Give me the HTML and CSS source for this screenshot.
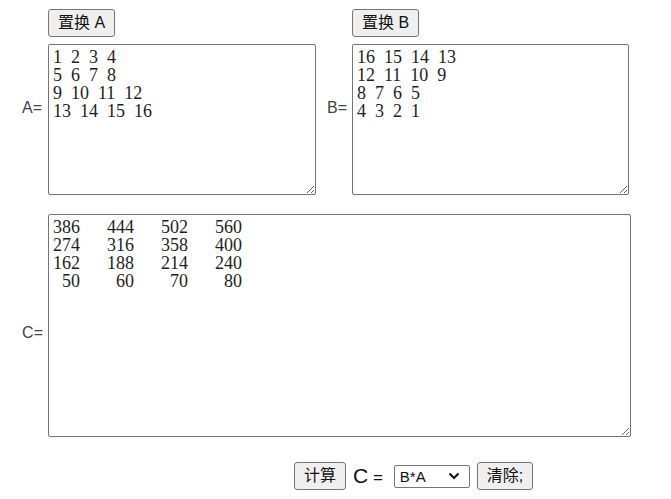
FILE: index.html
```html
<!DOCTYPE html>
<html>
<head>
<meta charset="utf-8">
<link rel="stylesheet" href="styles.css">
</head>
<body>
<div class="grid">
  <div class="cell"></div>
  <div class="cell"><button class="btn">置换 A</button></div>
  <div class="cell"></div>
  <div class="cell"><button class="btn">置换 B</button></div>

  <div class="label label-ab">A=</div>
  <textarea class="ta ta-a">1 2 3 4
5 6 7 8
9 10 11 12
13 14 15 16</textarea>
  <div class="label label-ab label-b">B=</div>
  <textarea class="ta ta-b">16 15 14 13
12 11 10 9
8 7 6 5
4 3 2 1</textarea>

  <div class="label label-c">C=</div>
  <textarea class="ta ta-c">386   444   502   560
274   316   358   400
162   188   214   240
 50    60    70    80</textarea>
</div>
<div class="controls">
  <button class="btn">计算</button>
  <span class="ceq"><span class="cbig">C</span> =</span>
  <div class="sel">
    <span>B*A</span>
    <svg width="12" height="8" viewBox="0 0 12 8"><path d="M1.5 1.5 L6 6 L10.5 1.5" fill="none" stroke="#111" stroke-width="2"/></svg>
  </div>
  <button class="btn">清除;</button>
</div>
</body>
</html>
```
FILE: styles.css
```css
html, body { margin: 0; padding: 0; background: #fff; }
body { font-family: "Liberation Sans", "Noto Sans CJK SC", sans-serif; color: #222; }
.grid {
  display: grid;
  grid-template-columns: 48px 268px 36px 279px;
  grid-template-rows: auto auto auto;
  padding-top: 9px;
}
.cell { display: flex; align-items: flex-start; }
.btn {
  font-family: "Liberation Sans", "Noto Sans CJK SC", sans-serif;
  font-size: 16px;
  height: 28px;
  padding: 0 9px;
  background: #efefef;
  border: 1px solid #767676;
  border-radius: 3px;
  color: #111;
  line-height: 26px;
  margin: 0;
}
.label {
  font-size: 16px;
  color: #444;
  display: flex;
  align-items: center;
  justify-content: flex-end;
  padding-right: 6px;
}
.label-ab { margin-top: 7px; padding-bottom: 24px; }
.label-b { padding-right: 5px; }
.label-c { margin-top: 19px; padding-top: 15px; padding-right: 5px; }
.ta {
  box-sizing: border-box;
  display: block;
  margin: 0;
  border: 1px solid #767676;
  border-radius: 2px;
  padding: 3px 3px 2px 4px;
  font-family: "Liberation Serif", serif;
  font-size: 18px;
  word-spacing: 4.5px;
  line-height: 18px;
  color: #1e1e1e;
  resize: both;
  white-space: pre;
  overflow: hidden;
}
.ta-a { width: 268px; height: 151px; margin-top: 7px; }
.ta-b { width: 277px; height: 151px; margin-top: 7px; }
.ta-c { grid-column: 2 / 5; width: 583px; height: 223px; margin-top: 19px; }
.controls {
  display: flex;
  align-items: center;
  gap: 7px;
  margin-top: 25px;
  padding-left: 294px;
}
.ceq { font-size: 17px; color: #111; margin: 0 2px 0 0; }
.cbig { font-size: 21px; }
.sel {
  box-sizing: border-box;
  width: 76px;
  height: 23px;
  border: 1px solid #767676;
  border-radius: 2px;
  display: flex;
  align-items: center;
  justify-content: space-between;
  padding: 0 9px 0 5px;
  font-size: 15px;
  color: #111;
  margin-left: 2px;
}
```
